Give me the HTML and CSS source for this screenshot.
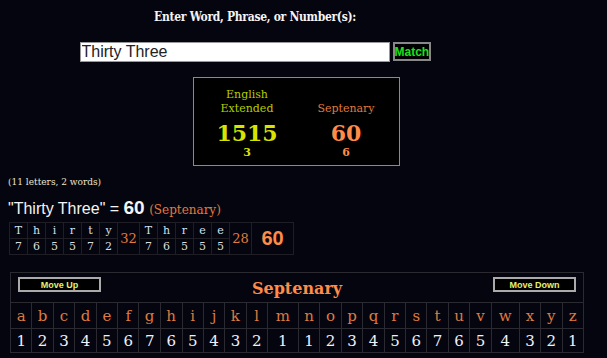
FILE: index.html
```html
<!DOCTYPE html>
<html lang="en">
<head>
  <meta charset="UTF-8">
  <title>Gematria</title>
  <link rel="stylesheet" href="styles.css">
</head>
<body>

<div class="entry">
  <h1>Enter Word, Phrase, or Number(s):</h1>
  <div class="entry-row">
    <input type="text" class="phrase" value="Thirty Three">
    <button class="match-btn">Match</button>
  </div>
</div>

<div class="totals">
  <div class="total eng">
    <div class="label">English<br>Extended</div>
    <div class="sum">1515</div>
    <div class="reduced">3</div>
  </div>
  <div class="total sep">
    <div class="label">Septenary</div>
    <div class="sum">60</div>
    <div class="reduced">6</div>
  </div>
</div>

<div class="counts">(11 letters, 2 words)</div>

<div class="result">"Thirty Three" = <b>60</b> <span class="cipher">(Septenary)</span></div>

<table class="breakdown">
  <tr>
    <td class="ch">T</td><td class="ch">h</td><td class="ch">i</td><td class="ch">r</td><td class="ch">t</td><td class="ch">y</td>
    <td class="word" rowspan="2">32</td>
    <td class="ch">T</td><td class="ch">h</td><td class="ch">r</td><td class="ch">e</td><td class="ch">e</td>
    <td class="word" rowspan="2">28</td>
    <td class="grand" rowspan="2">60</td>
  </tr>
  <tr>
    <td>7</td><td>6</td><td>5</td><td>5</td><td>7</td><td>2</td>
    <td>7</td><td>6</td><td>5</td><td>5</td><td>5</td>
  </tr>
</table>

<table class="chart">
  <tr>
    <td class="chart-head" colspan="26">
      <div class="head-row">
        <button class="move-btn">Move Up</button>
        <span class="chart-title">Septenary</span>
        <button class="move-btn">Move Down</button>
      </div>
    </td>
  </tr>
  <tr class="letters">
    <td>a</td><td>b</td><td>c</td><td>d</td><td>e</td><td>f</td><td>g</td><td>h</td><td>i</td><td>j</td><td>k</td><td>l</td><td>m</td>
    <td>n</td><td>o</td><td>p</td><td>q</td><td>r</td><td>s</td><td>t</td><td>u</td><td>v</td><td>w</td><td>x</td><td>y</td><td>z</td>
  </tr>
  <tr class="values">
    <td>1</td><td>2</td><td>3</td><td>4</td><td>5</td><td>6</td><td>7</td><td>6</td><td>5</td><td>4</td><td>3</td><td>2</td><td>1</td>
    <td>1</td><td>2</td><td>3</td><td>4</td><td>5</td><td>6</td><td>7</td><td>6</td><td>5</td><td>4</td><td>3</td><td>2</td><td>1</td>
  </tr>
</table>

</body>
</html>
```

FILE: styles.css
```css
* {
  box-sizing: border-box;
  margin: 0;
  padding: 0;
}

body {
  background-color: #05050f;
  color: #eee;
  font-family: "DejaVu Serif", serif;
  padding: 9px 8px 0 8px;
}

.entry {
  width: 494px;
  text-align: center;
}

.entry h1 {
  font-family: "DejaVu Serif Condensed", "DejaVu Serif", serif;
  font-stretch: condensed;
  font-size: 12px;
  line-height: 16px;
  font-weight: bold;
  letter-spacing: -0.3px;
  color: #f4f4f4;
  margin-bottom: 17px;
}

.entry-row {
  display: flex;
  justify-content: center;
  gap: 3px;
}

.phrase {
  width: 310px;
  height: 20px;
  border: 1px solid #999;
  background: #fff;
  color: #222;
  font-family: "Liberation Sans", Arial, sans-serif;
  font-size: 16px;
  padding: 0 1px;
}

.match-btn {
  width: 38px;
  height: 19px;
  background: #000;
  border: 2px solid #888;
  color: #1fe01f;
  font-family: "Liberation Sans", Arial, sans-serif;
  font-weight: bold;
  font-size: 12px;
}

.totals {
  width: 207px;
  height: 89px;
  margin: 15px 0 0 185px;
  border: 1px solid #8a8a8a;
  background: #000;
  display: flex;
  justify-content: center;
  gap: 9px;
  padding-top: 10px;
}

.total {
  width: 90px;
  text-align: center;
}

.total .label {
  height: 28px;
  font-size: 11px;
  line-height: 14px;
  display: flex;
  flex-direction: column;
  justify-content: flex-end;
}

.total .sum {
  font-size: 22px;
  line-height: 24px;
  font-weight: bold;
  margin-top: 5px;
}

.total .reduced {
  font-size: 11px;
  line-height: 12px;
  font-weight: bold;
  margin-top: 2px;
}

.eng .label { color: #b8cc00; }
.eng .sum, .eng .reduced { color: #d8e400; }
.sep .label { color: #e47a3c; }
.sep .sum, .sep .reduced { color: #ff8c48; }

.counts {
  margin-top: 10px;
  font-size: 9px;
  line-height: 12px;
  color: #ece4cc;
}

.result {
  margin-top: 10px;
  font-family: "Liberation Sans", Arial, sans-serif;
  font-size: 16px;
  line-height: 19px;
  color: #f4f4f4;
}

.result b {
  font-size: 19px;
}

.result .cipher {
  font-family: "DejaVu Serif", serif;
  font-size: 12px;
  color: #e47a3c;
}

.breakdown {
  border-collapse: collapse;
  margin: 2px 0 0 1px;
}

.breakdown td {
  border: 1px solid #1e1e24;
  width: 18px;
  height: 16px;
  text-align: center;
  font-size: 11px;
  color: #dcdcdc;
}

.breakdown td.ch {
  color: #cfe2f2;
}

.breakdown td.word {
  width: 22px;
  color: #e47a3c;
  font-size: 13px;
}

.breakdown td.grand {
  width: 42px;
  color: #ff8c48;
  font-family: "Liberation Sans", Arial, sans-serif;
  font-weight: bold;
  font-size: 20px;
}

.chart {
  width: 574px;
  margin: 17px 0 0 2px;
  border-collapse: collapse;
  border: 1px solid #2a2a30;
}

.chart td {
  border: 1px solid #2a2a30;
  text-align: center;
}

.chart-head {
  height: 30px;
  padding: 0 7px;
  vertical-align: top;
}

.head-row {
  display: flex;
  align-items: flex-start;
  justify-content: space-between;
  height: 29px;
}

.move-btn {
  width: 83px;
  height: 15px;
  margin-top: 4px;
  background: #000;
  border: 2px solid #aaa;
  color: #e4f070;
  font-family: "Liberation Sans", Arial, sans-serif;
  font-weight: bold;
  font-size: 9px;
}

.chart-title {
  color: #ff8c48;
  font-size: 16px;
  line-height: 20px;
  font-weight: bold;
  margin-top: 6px;
}

.letters td {
  height: 26px;
  font-size: 15px;
  color: #de7a40;
}

.values td {
  height: 24px;
  font-size: 15px;
  color: #eef2fa;
}
```
